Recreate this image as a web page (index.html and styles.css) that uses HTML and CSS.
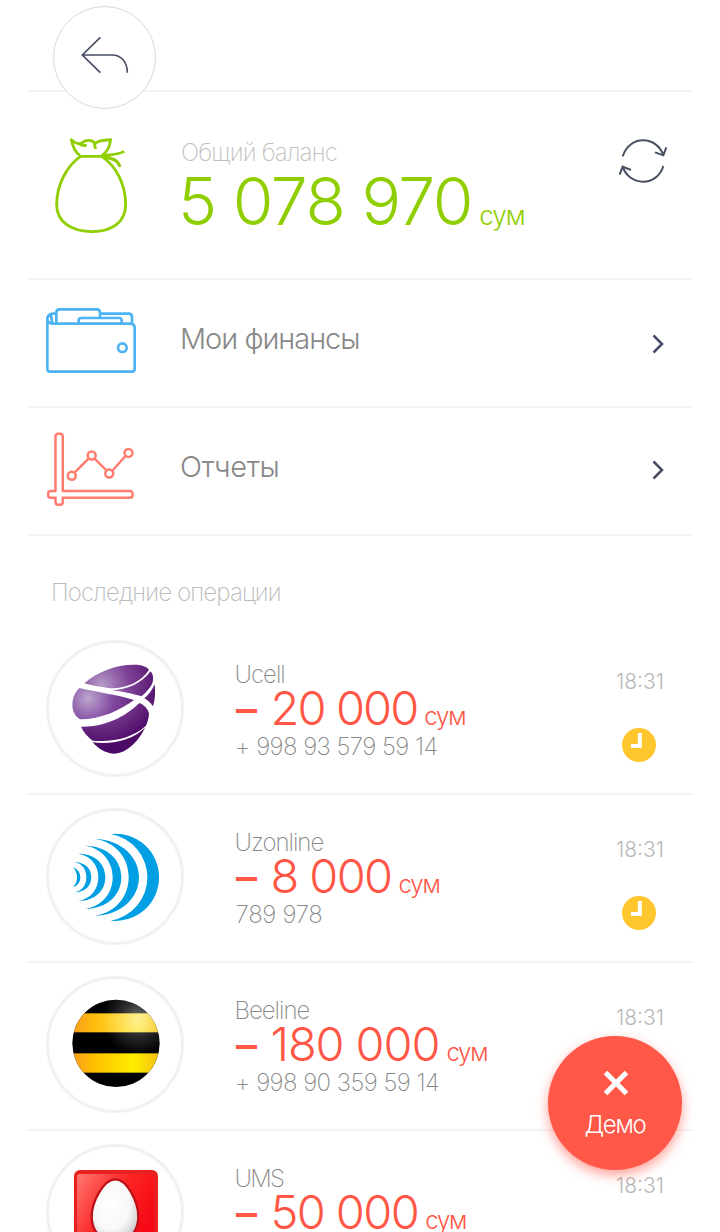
FILE: index.html
```html
<!DOCTYPE html>
<html lang="ru">
<head>
<meta charset="utf-8">
<title>Общий баланс</title>
<link rel="stylesheet" href="styles.css">
</head>
<body>
<main class="screen">
  <header class="topbar">
    <button class="back" aria-label="Назад">
      <svg class="back-icon" viewBox="183 108 144 114" fill="none" stroke="#474d63" stroke-width="5"><path d="M241 112L187 165L241 218M187 165H276C305 165 322 188 322 218"/></svg>
    </button>
  </header>

  <section class="balance">
    <svg class="bag" viewBox="102 410 220 291" fill="none" stroke="#8fce00" stroke-width="8.5" stroke-linejoin="round"><path d="M182 468C140 496 110 555 110 613C110 665 155 694 217 694C276 694 317 665 317 613C317 555 290 497 245 468ZM180 466C165 455 158 438 154 418C163 426 176 431 184 429C196 417 218 417 225 430C238 418 256 420 272 418C269 441 260 458 245 466M176 430C184 436 192 435 200 436M225 426C221 434 226 440 227 446M250 465C276 464 296 463 313 453M252 470C277 473 296 479 300 500"/></svg>
    <div class="balance-text">
      <div class="balance-label">Общий баланс</div>
      <div class="balance-sum"><span class="balance-value">5 078 970</span><span class="balance-unit">сум</span></div>
    </div>
    <svg class="refresh" viewBox="84 52 150 138" fill="none" stroke="#4a5064" stroke-width="6"><path d="M98 107C108 76 132 59 159 59C187 59 211 76 220 104M229 80L220 104L195 95M220 136C211 166 187 183 159 183C132 183 108 167 98 138M89 162L98 138L123 148"/></svg>
  </section>

  <section class="menu-row">
    <svg class="wallet" viewBox="48 54 270 195" fill="none" stroke="#4db3f2" stroke-width="8"><path d="M52 80V237Q52 245 60 245H306Q314 245 314 237V114Q314 101 300 101H68Q52 100 52 86Q53 72 70 71H77M60 73Q66 82 66 99M79 99V68Q79 58 89 58H200Q210 58 210 68V81M211 71H296Q306 71 306 81V103M146 99V91Q146 84 154 84H267Q275 84 275 92V99"/><circle cx="277" cy="173" r="13"/></svg>
    <span class="menu-title finance">Мои финансы</span>
    <svg class="chevron" viewBox="0 0 12 20"><path d="M1.5 1.5L10 10L1.5 18.5"/></svg>
  </section>

  <section class="menu-row reports">
    <svg class="chart" viewBox="51 50 261 223" fill="none" stroke="#ff7c6e" stroke-width="7.5"><path d="M76 228V64Q76 55 84 55H90Q98 55 98 64V228H300Q308 228 308 235V241Q308 248 300 248H98V260Q98 269 90 269H84Q76 269 76 260V248H62Q54 248 54 241V235Q54 228 62 228H79M134 172L175 131M195 132L229 165M248 166L286 123"/><circle cx="125" cy="182" r="12"/><circle cx="185" cy="121" r="12"/><circle cx="238" cy="175" r="12"/><circle cx="296" cy="113" r="12"/></svg>
    <span class="menu-title">Отчеты</span>
    <svg class="chevron" viewBox="0 0 12 20"><path d="M1.5 1.5L10 10L1.5 18.5"/></svg>
  </section>

  <h2 class="section-title">Последние операции</h2>

  <section class="ops">
    <article class="op">
      <div class="avatar">
        <svg viewBox="57 39 396 393">
          <defs>
            <radialGradient id="uc" gradientUnits="userSpaceOnUse" cx="215" cy="165" r="185"><stop offset="0" stop-color="#b49bc8"/><stop offset=".45" stop-color="#7f4297"/><stop offset="1" stop-color="#4c0a67"/></radialGradient>
            <radialGradient id="uc2" gradientUnits="userSpaceOnUse" cx="175" cy="205" r="150"><stop offset="0" stop-color="#bca6cf"/><stop offset=".5" stop-color="#8149a0"/><stop offset="1" stop-color="#652080"/></radialGradient>
          </defs>
          <g fill="url(#uc)">
            <path d="M163 160C200 125 260 104 310 104C335 104 352 110 357 120C330 160 280 178 235 174C210 171 185 166 163 160Z"/>
            <path d="M362 124C371 135 371 150 366 162C358 178 345 190 334 199C310 192 275 184 245 181C290 180 335 160 362 124Z"/>
            <path fill="url(#uc2)" d="M148 174C200 186 265 195 312 210C270 240 215 268 150 268C130 255 125 235 128 213C131 195 138 183 148 174Z"/>
            <path d="M374 163C377 185 375 210 369 229C362 218 352 210 343 205C355 195 367 180 374 163Z"/>
            <path d="M328 219C343 225 354 237 357 250C356 268 352 280 347 288C310 322 250 338 188 332C172 320 160 305 153 290C220 292 285 262 328 219Z"/>
            <path d="M345 293C330 325 295 371 250 371C225 370 200 352 188 337C250 345 310 328 345 293Z"/>
          </g>
        </svg>
      </div>
      <div class="op-body">
        <div class="op-name">Ucell</div>
        <div class="op-amount"><span class="minus">–</span><span class="num tight">20 000</span><span class="unit">сум</span></div>
        <div class="op-account">+ 998 93 579 59 14</div>
      </div>
      <div class="op-side"><time>18:31</time><svg class="clock" viewBox="0 0 34 34"><circle cx="17" cy="17" r="17" fill="#ffc62e"/><path d="M17.8 5V18H9" fill="none" stroke="#fff" stroke-width="4"/></svg></div>
    </article>

    <article class="op">
      <div class="avatar">
        <svg viewBox="57 33 396 393" fill="#009fe3">
          <path d="M242 102A130.8 130.8 0 1 1 242 362A131.8 131.8 0 0 0 242 102Z"/>
          <path d="M195 116C276 119 327 172 327 232C327 292 276 345 195 348C262 336 296 286 296 232C296 178 262 128 195 116Z"/>
          <path d="M166 137C233 138 274 180 274 232C274 284 233 326 166 327C220 318 248 276 248 232C248 188 220 146 166 137Z"/>
          <path d="M145 161C196 161 226 192 226 232C226 272 196 303 145 303C185 296 205 266 205 232C205 198 185 168 145 161Z"/>
          <path d="M134 187C164 186 184 206 184 232C184 258 164 278 134 277C158 273 169 254 169 232C169 210 158 191 134 187Z"/>
          <path d="M129 203C143 206 151 218 151 232C151 246 143 258 129 261C138 253 141 243 141 232C141 221 138 211 129 203Z"/>
        </svg>
      </div>
      <div class="op-body">
        <div class="op-name">Uzonline</div>
        <div class="op-amount"><span class="minus">–</span><span class="num">8 000</span><span class="unit">сум</span></div>
        <div class="op-account contract">789 978</div>
      </div>
      <div class="op-side"><time>18:31</time><svg class="clock" viewBox="0 0 34 34"><circle cx="17" cy="17" r="17" fill="#ffc62e"/><path d="M17.8 5V18H9" fill="none" stroke="#fff" stroke-width="4"/></svg></div>
    </article>

    <article class="op">
      <div class="avatar">
        <svg viewBox="57 42 396 393">
          <defs>
            <clipPath id="ball"><circle cx="258" cy="235" r="131"/></clipPath>
            <linearGradient id="y1"><stop offset="0" stop-color="#f79c1a"/><stop offset=".25" stop-color="#ffbe0f"/><stop offset=".75" stop-color="#ffe640"/><stop offset="1" stop-color="#f5c625"/></linearGradient>
            <linearGradient id="y2"><stop offset="0" stop-color="#f79a20"/><stop offset=".25" stop-color="#ffc000"/><stop offset=".7" stop-color="#ffee00"/><stop offset="1" stop-color="#f3bd12"/></linearGradient>
            <radialGradient id="shine" gradientUnits="userSpaceOnUse" cx="325" cy="160" r="110"><stop offset="0" stop-color="#fff" stop-opacity=".42"/><stop offset=".5" stop-color="#fff" stop-opacity=".16"/><stop offset="1" stop-color="#fff" stop-opacity="0"/></radialGradient>
          </defs>
          <g clip-path="url(#ball)">
            <rect x="120" y="100" width="280" height="270" fill="#000"/>
            <rect x="127" y="145" width="262" height="57" fill="url(#y1)"/>
            <rect x="127" y="265" width="262" height="58" fill="url(#y2)"/>
            <rect x="120" y="100" width="280" height="270" fill="url(#shine)"/>
          </g>
        </svg>
      </div>
      <div class="op-body">
        <div class="op-name">Beeline</div>
        <div class="op-amount"><span class="minus">–</span><span class="num wide">180 000</span><span class="unit">сум</span></div>
        <div class="op-account">+ 998 90 359 59 14</div>
      </div>
      <div class="op-side"><time>18:31</time></div>
    </article>

    <article class="op">
      <div class="avatar">
        <svg viewBox="57 546 396 393">
          <defs>
            <linearGradient id="red" x2="1" y2=".6"><stop offset="0" stop-color="#ff7770"/><stop offset=".5" stop-color="#fb2526"/><stop offset="1" stop-color="#f50713"/></linearGradient>
            <radialGradient id="egg" cx=".42" cy=".4" r=".62"><stop offset="0" stop-color="#fff"/><stop offset=".65" stop-color="#f8f8f8"/><stop offset="1" stop-color="#cfd0d4"/></radialGradient>
          </defs>
          <rect x="132" y="615" width="252" height="252" rx="18" fill="#e6211f"/>
          <rect x="141" y="627" width="232" height="231" rx="8" fill="url(#red)"/>
          <path d="M256 643C291 643 325 710 325 755C325 801 293 832 256 832C219 832 185 801 185 755C185 710 221 643 256 643Z" fill="url(#egg)" stroke="#bf1018" stroke-width="7"/>
        </svg>
      </div>
      <div class="op-body">
        <div class="op-name ums">UMS</div>
        <div class="op-amount"><span class="minus">–</span><span class="num">50 000</span><span class="unit">сум</span></div>
      </div>
      <div class="op-side"><time>18:31</time></div>
    </article>
  </section>

  <button class="fab">
    <svg class="fab-icon" viewBox="0 0 26 26"><path d="M2.5 2.5L23.5 23.5M23.5 2.5L2.5 23.5"/></svg>
    <span>Демо</span>
  </button>
</main>
</body>
</html>
```
FILE: styles.css
```css
* { box-sizing: border-box; }
body { margin: 0; background: #fff; font-family: Inter, "Liberation Sans", sans-serif; font-weight: 300; }
svg { display: block; flex: none; }
button { border: 0; padding: 0; font: inherit; }

.screen { position: relative; height: 1232px; padding: 0 28px; overflow: hidden; white-space: nowrap; }

.topbar { position: relative; height: 92px; border-bottom: 2px solid #f3f3f3; }
.back {
  position: absolute; left: 25px; top: 6px; width: 103px; height: 103px;
  display: flex; align-items: center; justify-content: center;
  border: 1.5px solid #d8d8d8; border-radius: 50%; background: #fff;
}
.back-icon { width: 48px; height: 38px; margin: 0 0 5px; }

.balance { display: flex; align-items: flex-start; height: 188px; padding: 0 24px 0 26px; border-bottom: 2px solid #f3f3f3; }
.bag { width: 73.3px; height: 97px; margin-top: 45px; }
.balance-text { flex: 1; margin-left: 53.7px; padding-top: 45px; }
.balance-label { font-size: 24px; line-height: 31px; color: #c0c0c0; font-weight: 225; letter-spacing: -0.8px; }
.balance-sum { margin-left: -3px; line-height: 66px; color: #8fce00; }
.balance-value { font-size: 66px; letter-spacing: -1.45px; font-weight: 265; }
.balance-unit { margin-left: 7px; font-size: 26px; letter-spacing: -0.9px; }
.refresh { width: 50px; height: 46px; margin-top: 46px; }

.menu-row { display: flex; align-items: center; height: 128px; padding: 0 28px 0 18px; border-bottom: 2px solid #f3f3f3; }
.wallet { width: 90px; height: 65px; margin-bottom: 6px; }
.chart { width: 87px; height: 74px; margin: 0 2px 4px 1px; }
.menu-title { flex: 1; margin: 0 0 8px 44px; font-size: 29px; line-height: 36px; color: #888; letter-spacing: -0.4px; font-weight: 260; }
.menu-title.finance { letter-spacing: -1px; }
.chevron { width: 12px; height: 20px; margin: 2px 0.5px 0 0; fill: none; stroke: #474d60; stroke-width: 2.5; }
.reports .chevron { margin: 0 0.5px 2px 0; }

.section-title { margin: 0; height: 91px; padding: 41px 0 0 23px; font-size: 24px; line-height: 31px; font-weight: 225; color: #bababa; letter-spacing: -0.85px; }

.op { display: flex; align-items: flex-start; height: 168px; padding: 13px 28px 0 18px; border-bottom: 2px solid #f3f3f3; }
.avatar { flex: none; width: 138px; height: 137px; border: 3px solid #f1f1f1; border-radius: 50%; }
.avatar svg { width: 132px; height: 131px; }
.op-body { flex: 1; margin-left: 50.5px; padding-top: 21px; }
.op-name { font-size: 24px; line-height: 27px; color: #888; letter-spacing: -1px; font-weight: 255; }
.op-name.ums { letter-spacing: -1.8px; }
.op-amount { display: flex; align-items: baseline; height: 40px; line-height: 39px; color: #ff5645; }
.minus { width: 36px; font-size: 42px; font-weight: 550; transform: translate(1.5px, -1px); }
.num { font-size: 47px; font-weight: 270; letter-spacing: -1.6px; }
.num.tight { letter-spacing: -1.9px; }
.num.wide { letter-spacing: -1.1px; }
.unit { margin-left: 7px; font-size: 24px; letter-spacing: -1.2px; }
.op-account { margin-top: 3px; padding-left: 0.5px; font-size: 24px; line-height: 32px; color: #888; letter-spacing: -0.55px; font-weight: 255; }
.op-account.contract { padding-left: 1px; letter-spacing: -0.3px; }
.op-side { display: flex; flex-direction: column; align-items: flex-end; padding-top: 27px; }
time { font-size: 21px; line-height: 30px; color: #b8b8b8; font-weight: 270; }
.clock { width: 34px; height: 34px; margin: 31px 8px 0 0; }

.fab {
  position: absolute; left: 548px; top: 1036px; width: 134px; height: 134px;
  display: flex; flex-direction: column; align-items: center; padding-top: 34px;
  border-radius: 50%; background: #ff5848; color: #fff; font-size: 24px; line-height: 30px; letter-spacing: -1.2px;
  box-shadow: 0 5px 12px rgba(255, 70, 55, .5);
}
.fab-icon { width: 26px; height: 26px; margin: 0 0 14px 1px; fill: none; stroke: #fff; stroke-width: 5; }
```
